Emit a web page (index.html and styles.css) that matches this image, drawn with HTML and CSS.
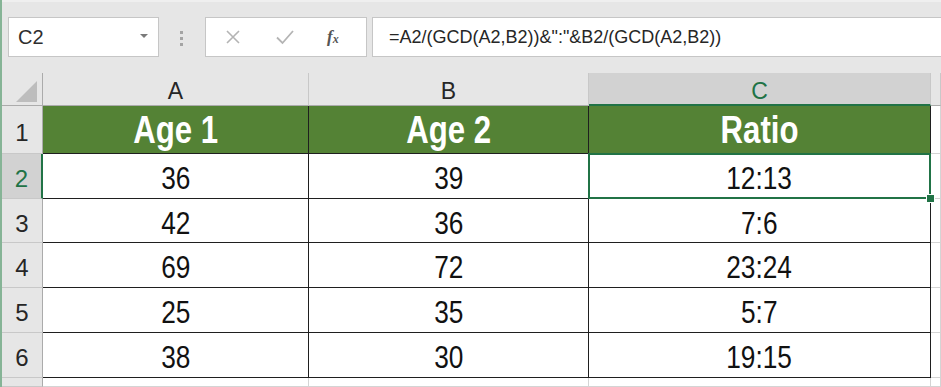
FILE: index.html
```html
<!DOCTYPE html>
<html lang="en">

<head>
    <meta charset="UTF-8">
    <meta name="viewport" content="width=device-width, initial-scale=1.0">
    <title>Ratio</title>

    <link rel="stylesheet" href="styles.css">
</head>

<body>
    <div class="window">
        <div class="toolbar">
            <div class="namebox">
                <span>C2</span>
                <span class="caret"></span>
            </div>
            <div class="grip"><i></i><i></i><i></i></div>
            <div class="fxbox">
                <svg class="cancel" width="16" height="16" viewBox="0 0 16 16">
                    <path d="M2 2 L14 14 M14 2 L2 14" stroke="#b4b4b4" stroke-width="1.6" fill="none" />
                </svg>
                <svg class="enter" width="20" height="16" viewBox="0 0 20 16">
                    <path d="M2 8.5 L7.5 14 L18 2" stroke="#b4b4b4" stroke-width="1.8" fill="none" />
                </svg>
                <span class="fx">f<sub>x</sub></span>
            </div>
            <div class="formula">=A2/(GCD(A2,B2))&amp;":"&amp;B2/(GCD(A2,B2))</div>
        </div>

        <div class="sheet">
            <div class="corner"><span class="tri"></span></div>
            <div class="hd">A</div>
            <div class="hd">B</div>
            <div class="hd sel">C</div>
            <div class="hd"></div>

            <div class="rh">1</div>
            <div class="title"><span class="narrow">Age 1</span></div>
            <div class="title"><span class="narrow">Age 2</span></div>
            <div class="title"><span class="narrow">Ratio</span></div>
            <div class="cell"></div>

            <div class="rh sel">2</div>
            <div class="val"><span class="narrow">36</span></div>
            <div class="val"><span class="narrow">39</span></div>
            <div class="val active"><span class="narrow">12:13</span></div>
            <div class="cell"></div>

            <div class="rh">3</div>
            <div class="val"><span class="narrow">42</span></div>
            <div class="val"><span class="narrow">36</span></div>
            <div class="val"><span class="narrow">7:6</span></div>
            <div class="cell"></div>

            <div class="rh">4</div>
            <div class="val"><span class="narrow">69</span></div>
            <div class="val"><span class="narrow">72</span></div>
            <div class="val"><span class="narrow">23:24</span></div>
            <div class="cell"></div>

            <div class="rh">5</div>
            <div class="val"><span class="narrow">25</span></div>
            <div class="val"><span class="narrow">35</span></div>
            <div class="val"><span class="narrow">5:7</span></div>
            <div class="cell"></div>

            <div class="rh">6</div>
            <div class="val"><span class="narrow">38</span></div>
            <div class="val"><span class="narrow">30</span></div>
            <div class="val"><span class="narrow">19:15</span></div>
            <div class="cell"></div>

            <div class="rh"></div>
            <div class="cell"></div>
            <div class="cell"></div>
            <div class="cell"></div>
            <div class="cell"></div>
        </div>
    </div>
</body>

</html>
```

FILE: styles.css
```css
*,
html {
    margin: 0;
    padding: 0;
    box-sizing: border-box;
}

html {
    overflow: hidden;
}

body {
    width: 941px;
    height: 387px;
    overflow: hidden;
    background: #e6e6e6;
    font-family: "Liberation Sans", Arial, sans-serif;
}

.window {
    height: 387px;
    border-left: 2px solid #86b496;
    display: flex;
    flex-direction: column;
}

/* formula bar */

.toolbar {
    height: 73px;
    flex: none;
    display: flex;
    align-items: flex-start;
    padding: 15px 0 0 6px;
    border-top: 2px solid #efefef;
    background: #e6e6e6;
}

.namebox {
    width: 151px;
    height: 40px;
    background: white;
    border: 1px solid #c6c6c6;
    display: flex;
    align-items: center;
    justify-content: space-between;
    padding: 0 10px 0 9px;
    font-size: 20px;
    color: #2e2e2e;
}

.caret {
    width: 0;
    height: 0;
    border-left: 4px solid transparent;
    border-right: 4px solid transparent;
    border-top: 4px solid #7a7a7a;
    margin-top: -2px;
}

.grip {
    width: 3px;
    margin: 14px 22px 0 21px;
    display: flex;
    flex-direction: column;
    gap: 3px;
}

.grip i {
    display: block;
    width: 3px;
    height: 3px;
    background: #a4a4a4;
}

.fxbox {
    width: 162px;
    height: 40px;
    background: white;
    border: 1px solid #c6c6c6;
    display: flex;
    align-items: center;
    padding-left: 19px;
}

.enter {
    margin-left: 34px;
}

.fx {
    margin-left: 32px;
    font-family: "Liberation Serif", serif;
    font-style: italic;
    font-weight: bold;
    font-size: 17px;
    color: #555;
}

.fx sub {
    font-size: 12px;
    vertical-align: -1px;
}

.formula {
    flex: 1;
    height: 40px;
    margin-left: 5px;
    margin-right: -2px;
    background: white;
    border: 1px solid #c6c6c6;
    padding-left: 16px;
    font-size: 18px;
    line-height: 38px;
    color: #262626;
    white-space: nowrap;
}

/* grid */

.sheet {
    flex: 1;
    display: grid;
    grid-template-columns: 41px 266px 280px 342px 1fr;
    grid-template-rows: 33px 48px 45px 44px 45px 45px 45px 1fr;
    background: white;
    overflow: hidden;
}

.sheet > div {
    display: flex;
    align-items: center;
    justify-content: center;
    line-height: 1;
}

.corner {
    background: #e6e6e6;
    border-right: 1px solid #ababab;
    border-bottom: 1px solid #ababab;
    position: relative;
}

.tri {
    position: absolute;
    right: 5px;
    bottom: 3px;
    width: 0;
    height: 0;
    border-left: 21px solid transparent;
    border-bottom: 21px solid #bdbdbd;
}

.hd {
    background: #e6e6e6;
    border-right: 1px solid #c8c8c8;
    border-bottom: 1px solid #ababab;
    font-size: 23px;
    color: #262626;
    padding-top: 5px;
}

.hd.sel {
    background: #d2d2d2;
    color: #217346;
    border-bottom: 2px solid #217346;
}

.rh {
    background: #e6e6e6;
    border-right: 1px solid #ababab;
    border-bottom: 1px solid #c8c8c8;
    font-size: 24px;
    color: #262626;
    padding-top: 6px;
}

.rh.sel {
    background: #d2d2d2;
    color: #217346;
    border-right: 2px solid #217346;
}

.cell {
    border-right: 1px solid #d4d4d4;
    border-bottom: 1px solid #d4d4d4;
}

.narrow {
    display: inline-block;
    transform: scaleX(0.82);
}

.title {
    background: #548235;
    color: white;
    font-weight: bold;
    font-size: 38px;
    border-right: 1px solid #1f1f1f;
    border-bottom: 1px solid #1f1f1f;
}

.val {
    font-size: 32px;
    color: #111;
    padding-top: 4px;
    border-right: 1px solid #1f1f1f;
    border-bottom: 1px solid #1f1f1f;
}

.active {
    position: relative;
}

.active::after {
    content: "";
    position: absolute;
    top: -1px;
    left: -1px;
    right: -1px;
    bottom: -1px;
    border: 2px solid #217346;
}

.active::before {
    content: "";
    position: absolute;
    right: -5px;
    bottom: -5px;
    width: 7px;
    height: 7px;
    background: #217346;
    border: 1px solid white;
    z-index: 1;
}
```
